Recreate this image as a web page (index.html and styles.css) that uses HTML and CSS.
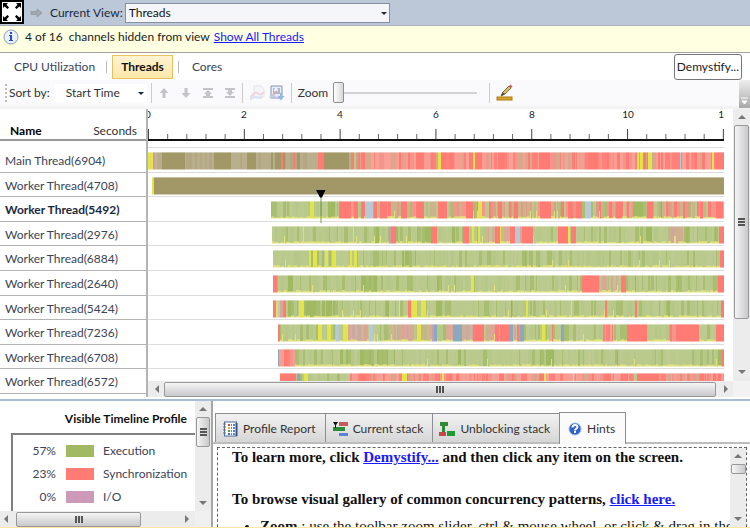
FILE: index.html
```html
<!DOCTYPE html>
<html lang="en">
<head>
<meta charset="utf-8">
<title>Threads</title>
<link rel="stylesheet" href="styles.css">
</head>
<body>
<header class="viewbar">
  <button class="expand" aria-label="Expand">
    <svg width="24" height="24" viewBox="0 0 24 24"><rect x="1" y="1" width="22" height="22" fill="#fff" stroke="#000" stroke-width="2"/><path d="M3 3h5L6.500 4.500 9 7.500 7.500 9 4.500 6.500 3 8zM21 3h-5l1.500 1.500L15 7.500 16.500 9l3-2.500L21 8zM3 21h5l-1.500-1.500L9 16.500 7.500 15l-3 2.500L3 16zM21 21h-5l1.500-1.500-2.500-3 1.500-1.500 3 2.500L21 16z"/></svg>
  </button>
  <svg class="go" width="13" height="10" viewBox="0 0 13 10"><path d="M1 3.500h6V1l5 4-5 4V6.500H1z" fill="#a3a9b3" stroke="#969ca6"/></svg>
  <label for="view">Current View:</label>
  <span class="pick pick-view"><select id="view"><option>Threads</option></select></span>
</header>

<div class="notice">
  <svg width="16" height="16" viewBox="0 0 16 16"><circle cx="8" cy="8" r="7" fill="#e9f0fa" stroke="#8d9db5"/><path d="M7 3h2v2H7zM6 6h3v5h1v1H6v-1h1V7H6z" fill="#1d4fc4"/></svg>
  <span>4 of 16&nbsp; channels hidden from view</span>
  <a href="#all">Show All Threads</a>
</div>

<nav class="modes">
  <button>CPU Utilization</button>
  <i></i>
  <button class="on">Threads</button>
  <i></i>
  <button>Cores</button>
  <button class="demystify">Demystify...</button>
</nav>

<div class="toolbar">
  <span class="handle"></span>
  <label for="sort">Sort by:</label>
  <span class="pick pick-sort"><select id="sort"><option>Start Time</option></select></span>
  <i class="sep"></i>
  <div class="tools">
    <button aria-label="Move up"><svg width="12" height="12" viewBox="0 0 12 12"><path d="M6 1l4.500 5H7.500v5h-3V6H1.500z" fill="#c3c3c8"/></svg></button>
    <button aria-label="Move down"><svg width="12" height="12" viewBox="0 0 12 12"><path d="M6 11l4.500-5H7.500V1h-3v5H1.500z" fill="#c3c3c8"/></svg></button>
    <button aria-label="Move to top"><svg width="12" height="12" viewBox="0 0 12 12"><path d="M1 1h10v2H1zM6 3l4 4H8v2h3v2H1V9h3V7H2z" fill="#c3c3c8"/></svg></button>
    <button aria-label="Move to bottom"><svg width="12" height="12" viewBox="0 0 12 12"><path d="M1 9h10v2H1zM6 9l4-4H8V3h3V1H1v2h3v2H2z" fill="#c3c3c8"/></svg></button>
  </div>
  <i class="sep"></i>
  <button aria-label="Hide channel"><svg width="16" height="16" viewBox="0 0 16 16"><path d="M5 1h7l3 3v8H5z" fill="#f5f5f9" stroke="#e4e4ea"/><path d="M1 12c3-1 4-6 7-4s4 2 7-1" fill="none" stroke="#f0d6d9" stroke-width="2"/><path d="M1 14c3 0 4-3 6-2s4 1 6 0" fill="none" stroke="#d8e2f3" stroke-width="2"/></svg></button>
  <button aria-label="Show all channels"><svg width="16" height="16" viewBox="0 0 16 16"><path d="M2 1h11v12H2z" fill="#e8edf7" stroke="#8397bb"/><rect x="4" y="3" width="7" height="6" fill="#a9b8d6"/><circle cx="7" cy="5" r="2" fill="#f4f6fb"/><path d="M5 9l3-3" stroke="#e0a9ad" stroke-width="2"/><path d="M1 13l3-3 3 3" fill="none" stroke="#c3cbdb" stroke-width="2"/><path d="M11 8h2v3h2.500L12 15.500 8.500 11H11z" fill="#92b5ea"/></svg></button>
  <i class="sep"></i>
  <label for="zoom">Zoom</label>
  <input id="zoom" type="range" min="0" max="100" value="0">
  <i class="sep"></i>
  <button aria-label="Measure"><svg width="18" height="18" viewBox="0 0 18 18"><rect x="1" y="13" width="15" height="3" fill="#d9a526" stroke="#a87a16"/><path d="M5 12l2-4 6-6 2 2-6 6z" fill="#d8bd65" stroke="#7d7242"/><path d="M5 12l1.500-3.500L9 10z" fill="#444"/><path d="M13 2l1.500-1.500 2 2L15 4z" fill="#d75b50"/></svg></button>
  <span class="more"><svg width="7" height="8" viewBox="0 0 7 8"><path d="M0 1h7M1 4h5L3.500 7z" fill="#fff" stroke="#fff"/></svg></span>
</div>

<main class="timeline">
  <section class="names">
    <div class="names-head"><b>Name</b><span>Seconds</span></div>
    <ul>
      <li>Main Thread(6904)</li>
      <li>Worker Thread(4708)</li>
      <li class="picked">Worker Thread(5492)</li>
      <li>Worker Thread(2976)</li>
      <li>Worker Thread(6884)</li>
      <li>Worker Thread(2640)</li>
      <li>Worker Thread(5424)</li>
      <li>Worker Thread(7236)</li>
      <li>Worker Thread(6708)</li>
      <li>Worker Thread(6572)</li>
    </ul>
  </section>
  <section class="chart">
    <div class="plot">
      <svg class="axis" id="axis" width="100%" height="32"></svg>
      <div class="lanes" id="lanes">
        <svg class="marker" width="10" height="33" viewBox="0 0 10 33"><path d="M5 6v27" stroke="#7f9a55"/><path d="M0 0h9.500L6 7.500H4z"/></svg>
      </div>
    </div>
    <div class="hbar"><i class="left"></i><span class="thumb grip-x"></span><i class="right"></i></div>
  </section>
  <div class="vbar"><i class="up"></i><span class="thumb grip-y"></span><i class="down"></i><em></em></div>
</main>

<div class="bottom">
  <aside class="profile">
    <div class="profile-view">
      <h2>Visible Timeline Profile</h2>
      <ul class="legend">
        <li><span>57%</span><i class="exec"></i>Execution</li>
        <li><span>23%</span><i class="sync"></i>Synchronization</li>
        <li><span>0%</span><i class="io"></i>I/O</li>
      </ul>
    </div>
    <div class="vbar"><i class="up"></i><span class="thumb grip-y"></span><i class="down"></i></div>
    <div class="hbar"><i class="left"></i><span class="thumb grip-x"></span><i class="right"></i></div>
  </aside>
  <section class="report">
    <div class="tabs">
      <button><svg width="16" height="16" viewBox="0 0 16 16"><rect x="2.500" y="1" width="12" height="14" fill="#fff" stroke="#4c6d9c"/><path d="M14.500 2v13" stroke="#345382" stroke-width="2"/><path d="M1 3h3M1 6h3M1 9h3M1 12h3" stroke="#777"/><path d="M6 3h2v2H6z" fill="#d44"/><path d="M6 6h2v2H6z" fill="#e9b52c"/><path d="M6 9h2v2H6z" fill="#44a04a"/><path d="M6 12h2v2H6z" fill="#3d74cc"/><path d="M9 4h1M11 4h2M9 7h1M11 7h2M9 10h1M11 10h2M9 13h1M11 13h2" stroke="#5c86bf" stroke-width="2"/></svg>Profile Report</button>
      <button><svg width="16" height="16" viewBox="0 0 16 16"><rect x="7" y="1" width="9" height="4" fill="#c8585a"/><rect x="1" y="6" width="12" height="4" fill="#2c8b37"/><rect x="7" y="12" width="9" height="3" fill="#5d83d6"/><path d="M1 1h5L3.500 5zM3 4h1v3H3z" fill="#111"/></svg>Current stack</button>
      <button><svg width="16" height="16" viewBox="0 0 16 16"><path d="M1 1h8v4H6v6H3V5H1z" fill="#2c8b37"/><rect x="0" y="11" width="7" height="4" fill="#c8474a"/><rect x="8" y="10" width="8" height="5" fill="#1f9b35"/></svg>Unblocking stack</button>
      <button class="on"><svg width="14" height="14" viewBox="0 0 14 14"><circle cx="7" cy="7" r="6" fill="#2d62cf" stroke="#9db8e4"/><path d="M4.500 5.500c0-3.500 5-3 5-.5 0 1.700-2.300 1.600-2.500 3.500M6 10h2" fill="none" stroke="#fff" stroke-width="2"/></svg>Hints</button>
    </div>
    <div class="hints">
      <div class="hints-text">
        <p>To learn more, click <a href="#demystify">Demystify...</a> and then click any item on the screen.</p>
        <p>To browse visual gallery of common concurrency patterns, <a href="#gallery">click here.</a></p>
        <ul><li><b>Zoom</b> : use the toolbar zoom slider, ctrl &amp; mouse wheel, or click &amp; drag in the</li></ul>
      </div>
      <div class="vbar"><i class="up"></i><span class="thumb"></span><i class="down"></i></div>
    </div>
  </section>
</div>
<script src="timeline.js"></script>
</body>
</html>
```
FILE: styles.css
```css
* { box-sizing: border-box; }

body {
  margin: 0;
  height: 100vh;
  display: flex;
  flex-direction: column;
  overflow: hidden;
  background: #fff;
  color: #3c4356;
  font: 12px/16px Lato, "Open Sans", sans-serif;
  border-bottom: 1px solid #fbe6a2;
}

button, select {
  font: inherit;
  color: inherit;
  background: none;
  border: 0;
  padding: 0;
}

ul { list-style: none; margin: 0; padding: 0; }
a { color: #1a1aff; }
svg { display: block; flex: none; }

/* current view */
.viewbar {
  flex: none;
  height: 26px;
  display: flex;
  align-items: center;
  background: #bcc7d8;
  border-bottom: 1px solid #a9b0bb;
  color: #1b293e;
}
.expand { align-self: flex-start; }
.go { margin: 0 7px 0 6px; }
.pick { position: relative; display: flex; }
.pick select { width: 100%; appearance: none; color: #111; }
.pick::after {
  content: "";
  position: absolute;
  right: 3px;
  top: 50%;
  margin-top: -1px;
  border: 3px solid transparent;
  border-top-color: #1b293e;
  border-bottom: 0;
}
.pick-view { width: 265px; margin-left: 2px; }
.pick-view select {
  height: 20px;
  padding-left: 3px;
  background: #f4f6fa;
  border: 1px solid #8591a2;
}

/* notice */
.notice {
  flex: none;
  height: 27px;
  display: flex;
  align-items: center;
  gap: 4px;
  padding: 0 3px 4px;
  background: #ffffe1;
  border-bottom: 1px solid #a0a0a0;
  color: #222;
}
.notice span { margin-left: 2px; }

/* mode tabs */
.modes {
  flex: none;
  height: 27px;
  display: flex;
  align-items: center;
  padding-left: 14px;
}
.modes i { width: 1px; height: 12px; background: #bbb; margin: 0 5px 0 11px; }
.modes i + button:not(.on) { margin-left: 8px; }
.modes .on {
  height: 24px;
  padding: 0 8px;
  background: linear-gradient(#fff3d2, #ffe8a8);
  border: 1px solid #e5c365;
  color: #111;
  font-weight: 700;
}
.modes i:nth-of-type(2) { margin-left: 5px; }
.modes .demystify {
  height: 26px;
  margin: 0 8px 0 auto;
  padding: 0 2px;
  border: 1px solid #777;
  border-radius: 3px;
  color: #222;
}

/* toolbar */
.toolbar {
  flex: none;
  height: 29px;
  display: flex;
  align-items: center;
  padding-left: 5px;
  background: #faf9fb;
  border-bottom: 3px solid #f3f3f4;
  color: #333;
}
.handle { width: 2px; height: 18px; margin-right: 2px; border-left: 2px dotted #bbb; }
.pick-sort { width: 92px; margin-left: 5px; background: #fff; }
.pick-sort select { height: 18px; padding-left: 11px; color: #333; }
.sep { width: 1px; height: 20px; background: #ccc; margin: 0 6px; }
.pick-sort + .sep { margin-left: 4px; }
.tools { display: flex; gap: 10px; }
.toolbar .sep + button { margin-right: 4px; }
#zoom {
  appearance: none;
  width: 144px;
  height: 22px;
  margin: 0 6px 0 5px;
  background: none;
}
#zoom::-webkit-slider-runnable-track { height: 2px; background: #d0d2d3; }
#zoom::-webkit-slider-thumb {
  appearance: none;
  width: 11px;
  height: 21px;
  margin-top: -10px;
  border: 1px solid #8e8e8e;
  border-radius: 2px;
  background: linear-gradient(90deg, #fff, #d8d8d8);
}
.more {
  align-self: stretch;
  margin: 0 0 -2px auto;
  width: 11px;
  display: flex;
  align-items: flex-end;
  justify-content: center;
  padding-bottom: 3px;
  background: linear-gradient(#eee, #a9a9a9);
  border-top-left-radius: 3px;
}

/* timeline */
.timeline {
  flex: none;
  display: flex;
  height: 288px;
  overflow: hidden;
}
.names { width: 148px; border-right: 2px solid #b4b4b4; }
.names-head {
  height: 32px;
  display: flex;
  justify-content: space-between;
  align-items: flex-end;
  padding: 0 9px 0 10px;
  border-bottom: 2px solid #999;
  color: #333;
}
.names-head b { color: #000; }
.names ul {
  margin-top: 7px;
  height: 246px;
  display: grid;
  grid-auto-rows: 1fr;
}
.names li {
  padding-left: 5px;
  line-height: 26px;
  overflow: hidden;
  border-bottom: 1px solid #b4b4b4;
}
.names .picked { font-weight: 700; color: #1b293e; }

.chart { flex: 1; min-width: 0; display: flex; flex-direction: column; }
.plot { flex: 1; min-height: 0; margin-right: 9px; overflow: hidden; }
.axis text { font-size: 10px; fill: #222; text-anchor: middle; }
.axis { border-bottom: 2px solid #111; }
.lanes {
  position: relative;
  margin-top: 6px;
  height: 247px;
  display: grid;
  grid-auto-rows: 1fr;
  border-top: 1px solid #ddd;
}
.lane { padding-top: 4px; border-bottom: 1px solid #ddd; }
.lane svg { width: 100%; height: 18px; }
.marker { position: absolute; left: 29.2%; top: 42px; }

/* scroll bars */
.vbar, .hbar { flex: none; display: flex; align-items: center; background: #ececec; }
.vbar { flex-direction: column; width: 17px; }
.hbar { height: 16px; }
.vbar i, .hbar i { flex: none; border: 4px solid transparent; }
.vbar i { margin: 6px 0; }
.hbar i { margin: 0 4px; }
.vbar .up { border-bottom-color: #777; border-top: 0; }
.vbar .down { border-top-color: #777; border-bottom: 0; margin-top: auto; }
.hbar .left { border-right-color: #777; border-left: 0; }
.hbar .right { border-left-color: #777; border-right: 0; margin-left: auto; }
.thumb {
  display: flex;
  border: 1px solid #989898;
  border-radius: 2px;
  background: linear-gradient(90deg, #f5f5f5, #c9c9cd);
}
.hbar .thumb { height: 15px; background: linear-gradient(#f5f5f5, #c9c9cd); }
.vbar .thumb { width: 15px; }
.thumb::after { content: ""; margin: auto; }
.grip-x::after { width: 8px; height: 7px; background: repeating-linear-gradient(90deg, #555 0 2px, #ddd 2px 3px); }
.grip-y::after { width: 7px; height: 8px; background: repeating-linear-gradient(#555 0 2px, #ddd 2px 3px); }

.timeline .hbar .left { margin-left: 7px; margin-right: 5px; }
.timeline .hbar .thumb { flex: 1; }
.timeline .hbar .right { margin-left: 8px; margin-right: 5px; }
.timeline .vbar .thumb { flex: none; height: 194px; }
.timeline .vbar em { width: 17px; height: 16px; margin-top: 1px; background: #f2f2f2; }

/* bottom panes */
.bottom {
  flex: 1;
  min-height: 0;
  display: flex;
  margin-top: 2px;
  border-top: 2px solid #a9bdd6;
}
.profile {
  flex: none;
  width: 213px;
  display: grid;
  grid-template: minmax(0, 1fr) 16px / minmax(0, 1fr) 16px;
  border-right: 2px solid #a6a6a6;
}
.profile::after { content: ""; background: #f0f0f0; }
.profile-view { overflow: hidden; display: flex; flex-direction: column; }
.profile h2 {
  margin: 10px 0 6px;
  padding-right: 8px;
  font-size: 12px;
  line-height: 16px;
  text-align: right;
  color: #111;
}
.legend {
  flex: 1;
  margin-left: 11px;
  padding-top: 4px;
  border: solid #808080;
  border-width: 2px 0 0 2px;
}
.legend li { display: flex; align-items: center; height: 23px; white-space: nowrap; }
.legend span { width: 43px; text-align: right; }
.legend i { width: 28px; height: 12px; margin: 0 9px 0 10px; }
.exec { background: #a2b964; }
.sync { background: #ff7b73; }
.io { background: #cc99b8; }
.profile .vbar { width: 16px; }
.profile .vbar .thumb { height: 30px; width: 14px; }
.profile .hbar .thumb { width: 125px; margin-left: 4px; }
.profile .hbar .right { margin-right: 6px; }

.report { flex: 1; min-width: 0; display: flex; flex-direction: column; background: #fff; }
.tabs {
  flex: none;
  display: flex;
  align-items: flex-end;
  height: 43px;
  padding-left: 2px;
  border-bottom: 2px solid #bdbdbd;
}
.tabs button {
  display: flex;
  align-items: center;
  gap: 5px;
  height: 29px;
  padding: 2px 9px 0 6px;
  border: 1px solid #8c8e94;
  border-bottom: 0;
  border-right-width: 0;
  background: linear-gradient(#f2f2f2, #d6d6d6);
  color: #333;
}
.tabs .on {
  height: 32px;
  margin-bottom: -2px;
  padding: 0 10px 0 8px;
  border-right-width: 1px;
  background: #fbfbfb;
}
.hints {
  flex: 1;
  min-height: 0;
  display: flex;
  margin: 3px 3px 0 4px;
  border: 1px dashed #666;
  border-bottom: 0;
  color: #111;
  font: 15px/18px "Liberation Serif", serif;
}
.hints-text { flex: 1; min-width: 0; overflow: hidden; padding-left: 14px; white-space: nowrap; }
.hints p { margin: 0 0 24px; font-weight: 700; }
.hints p + p { margin-bottom: 9px; }
.hints ul { padding-left: 28px; list-style: disc; }
.hints .vbar { width: 16px; }
.hints .thumb { height: 10px; }
```
FILE: timeline.js
```js
// Thread states: one letter per state, colours picked at random inside it.
const STATES = {
  G: ['#b9ca8c', '#b9ca8c', '#b6c888', '#bdcb92', '#a9be70'],
  D: ['#a2b964', '#a8bd6e', '#a2b964', '#b6c888'],
  R: ['#ff7b73'],
  S: ['#ff7b73', '#f99d92', '#f8a196', '#f5948a', '#ff8179', '#d9a78c'],
  M: ['#b9ca8c', '#c3b78a', '#e09b84', '#f8958b', '#a9be70', '#c9b48c', '#ff7b73'],
  N: ['#c5bb8c', '#d6ab94', '#b9ca8c', '#c3b78a', '#dfa396', '#cfa5a8'],
  Y: ['#e3e34a'],
  P: ['#cc99b8'],
  B: ['#8aa8c0'],
  L: ['#b6c9d4'],
  T: ['#a29766'],
  U: ['#a29766', '#b8ad8a'],
  K: ['#b9af8c', '#b9af8c', '#b3a883']
};
// Each lane: start, then "end + state" tokens, in 576 units for 12 seconds.
const LANES = [
  '0 5Y 7P 9N 14U 37T 66K 83T 99K 108T 113K 133U 135R 137T 145K 147R 149K 152T 170K 176R 201T 203K 206R 208G 210U 268S 276R 290S 293Y 298R 325S 327Y 334R 350S 356R 392S 402R 440S 450R 489S 491Y 492S 495Y 500S 504Y 532S 533L 564S 566Y 568S 576R',
  '4 6Y 576T',
  '123 162G 166Y 180G 188D 191G 203R 206M 210R 213G 216R 217M 225L 226M 229R 232M 239R 253M 259R 269M 276R 290M 299R 318M 325R 330M 334Y 341M 343R 350M 354R 366M 370R 392M 403R 420M 425R 428M 434R 437G 440L 443L 468M 474R 485M 495D 499M 505R 535M 537R 552M 555R 568M 575R 576S',
  '124 155G 156Y 205G 206Y 228G 232D 241G 243P 248R 252D 269G 283D 289R 304G 308D 315G 321R 324G 326Y 330G 332Y 337G 347N 352R 353Y 362N 367R 372L 374N 385R 410G 420R 422Y 423G 428R 495G 504D 514G 536N 542D 566G 570D 571G 576R',
  '125 161G 163Y 165G 169Y 177G 180Y 184G 188Y 202G 204Y 206G 209Y 254G 268D 374G 379D 489G 492D 572G 576R',
  '125 129R 139G 145D 213G 230D 289G 293D 323G 326Y 377G 380D 434G 451R 469N 473G 478R 484G 488D 530G 533D 570G 576R',
  '125 128R 130Y 132L 138S 140G 145D 151G 156Y 187D 237G 241D 251G 252Y 260G 263R 269Y 273G 278Y 288G 294D 363G 364R 378G 380Y 423G 424Y 428G 431D 457G 459R 487G 489R 519G 522D 542G 547D 573G 576R',
  '130 132R 170G 174Y 179G 183Y 188G 191L 195G 200Y 221N 225L 240G 269N 273Y 284N 286P 289B 298D 305N 314B 325N 336R 347N 351R 352N 357R 362R 365B 369N 371R 372P 376B 394G 397Y 404G 405R 413G 416B 455G 465S 479G 499R 522G 528S 551R 568G 576R',
  '130 131B 147S 192G 200D 212G 247D 310G 313D 392G 408D 467G 470D 570G 574D 576R',
  '132 148R 149N 152B 155D 156G 160Y 202G 254S 259Y 294S 296Y 396S 398Y 425S 426Y 485S 489G 507R 576S'
];
const GRASSY = 'GDMN';
const NS = 'http://www.w3.org/2000/svg';

let seed = 7;
function rand() {
  seed = (seed * 16807) % 2147483647;
  return seed / 2147483647;
}

function add(parent, name, attrs) {
  const node = document.createElementNS(NS, name);
  for (const key in attrs) node.setAttribute(key, attrs[key]);
  parent.appendChild(node);
  return node;
}

const lanes = document.getElementById('lanes');
LANES.forEach((lane, index) => {
  const box = document.createElement('div');
  box.className = 'lane';
  lanes.appendChild(box);
  const svg = add(box, 'svg', { viewBox: '0 0 576 18', preserveAspectRatio: 'none' });
  const [first, ...tokens] = lane.split(' ');
  let x = Number(first);
  for (const token of tokens) {
    const end = parseInt(token, 10);
    const state = token.slice(-1);
    const colours = STATES[state];
    while (x < end) {
      const w = colours.length === 1 ? end - x : Math.min(end - x, 1 + Math.floor(rand() * 3));
      add(svg, 'rect', { x, y: 0, width: w, height: 18, fill: colours[Math.floor(rand() * colours.length)] });
      if (GRASSY.includes(state) && index > 1 && index < 9) {
        const spike = rand() < 0.03;
        const h = spike ? 8 : 1 + rand() * 2;
        add(svg, 'rect', { x, y: 18 - h, width: spike ? 1 : w, height: h, fill: '#e3e37a', opacity: 0.9 });
      }
      x += w;
    }
  }
  add(svg, 'rect', { x: first, y: 0, width: 576, height: 1, fill: '#fff', opacity: 0.4 });
  add(svg, 'rect', { x: first, y: 17, width: 576, height: 1, fill: '#fff', opacity: 0.5 });
});

const axis = document.getElementById('axis');
for (let i = 0; i <= 30; i++) {
  const major = i % 5 === 0;
  add(axis, 'rect', {
    x: (i / 30 * 99.8) + '%', y: major ? 20 : 25, width: 1, height: 12, fill: major ? '#444' : '#666'
  });
  if (major) add(axis, 'text', { x: (i / 30 * 100) + '%', y: 9 }).textContent = i / 5 * 2;
}
```
